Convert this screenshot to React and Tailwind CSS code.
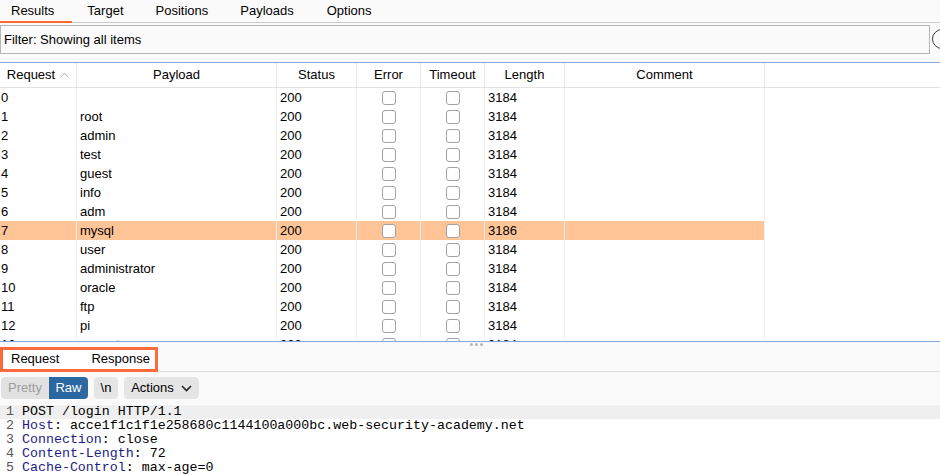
import React from 'react';

const columns = [
  { key: 'request', label: 'Request', width: 'w-[77px]' },
  { key: 'payload', label: 'Payload', width: 'w-[200px]' },
  { key: 'status', label: 'Status', width: 'w-[80px]' },
  { key: 'error', label: 'Error', width: 'w-[64px]' },
  { key: 'timeout', label: 'Timeout', width: 'w-[64px]' },
  { key: 'length', label: 'Length', width: 'w-[80px]' },
  { key: 'comment', label: 'Comment', width: 'w-[200px]' },
];

const payloads = ['', 'root', 'admin', 'test', 'guest', 'info', 'adm', 'mysql', 'user', 'administrator', 'oracle', 'ftp', 'pi', 'puppet', 'ansible'];

const rows = payloads.map((p, i) => ({
  id: i,
  payload: p,
  status: 200,
  length: i === 7 ? 3186 : 3184,
  selected: i === 7,
}));

const requestLines = [
  { name: null, value: 'POST /login HTTP/1.1' },
  { name: 'Host', value: 'acce1f1c1f1e258680c1144100a000bc.web-security-academy.net' },
  { name: 'Connection', value: 'close' },
  { name: 'Content-Length', value: '72' },
  { name: 'Cache-Control', value: 'max-age=0' },
];

const Checkbox = () => (
  <span className="block w-[14px] h-[14px] rounded-[3px] border border-[#a3a3a3] bg-white" />
);

const SortCaret = () => (
  <svg width="9" height="6" viewBox="0 0 9 6" className="ml-[5px]">
    <path d="M0.5 5.5 L4.5 1 L8.5 5.5" fill="none" stroke="#b0b0b0" strokeWidth="1" />
  </svg>
);

const Chevron = () => (
  <svg width="11" height="7" viewBox="0 0 11 7" className="ml-[7px]">
    <path d="M1 1 L5.5 5.5 L10 1" fill="none" stroke="#222" strokeWidth="1.6" />
  </svg>
);

const App = () => {
  return (
    <div className="w-[940px] h-[475px] overflow-hidden bg-white text-[13px] text-black font-['Liberation_Sans',Arial,sans-serif]">
      {/* top tabs */}
      <div className="h-[23px] bg-[#fafafa] border-b border-[#cacaca] flex">
        <div className="relative pl-[11px] pr-[18px] h-full flex items-center">
          Results
          <span className="absolute left-0 right-0 bottom-[-1px] h-[2px] bg-[#ff6a33]" />
        </div>
        <div className="ml-[15px] h-full flex items-center">Target</div>
        <div className="ml-[32px] h-full flex items-center">Positions</div>
        <div className="ml-[32px] h-full flex items-center">Payloads</div>
        <div className="ml-[33px] h-full flex items-center">Options</div>
      </div>

      {/* filter */}
      <div className="h-[40px] bg-[#fafafa] border-b border-[#84a9d9] pt-[2px] flex items-start overflow-hidden">
        <div className="w-[930px] shrink-0 h-[29px] border border-[#b6b6b6] bg-[#fafafa] flex items-center pl-[3px]">
          Filter: Showing all items
        </div>
        <span className="shrink-0 ml-[2px] mt-[4px] w-[20px] h-[20px] rounded-full border border-[#3a3a3a]" />
      </div>

      {/* table header */}
      <div className="h-[25px] flex border-b border-[#e2e2e2] bg-white">
        {columns.map((c) => (
          <div key={c.key} className={`${c.width} shrink-0 h-full border-r border-[#e6e6e6] flex items-center justify-center`}>
            {c.label}
            {c.key === 'request' && <SortCaret />}
          </div>
        ))}
      </div>

      {/* table rows */}
      <div className="h-[253px] overflow-hidden">
        {rows.map((r) => (
          <div key={r.id} className="h-[19px] flex">
            <div className={`flex shrink-0 ${r.selected ? 'bg-[#ffc597]' : ''}`}>
              <div className="w-[77px] h-[19px] pl-[1px] flex items-center border-r border-[#f0f0f0]">{r.id}</div>
              <div className="w-[200px] h-[19px] pl-[3px] flex items-center border-r border-[#f0f0f0]">{r.payload}</div>
              <div className="w-[80px] h-[19px] pl-[3px] flex items-center border-r border-[#f0f0f0]">{r.status}</div>
              <div className="w-[64px] h-[19px] flex items-center justify-center border-r border-[#f0f0f0]"><Checkbox /></div>
              <div className="w-[64px] h-[19px] flex items-center justify-center border-r border-[#f0f0f0]"><Checkbox /></div>
              <div className="w-[80px] h-[19px] pl-[3px] flex items-center border-r border-[#f0f0f0]">{r.length}</div>
              <div className="w-[200px] h-[19px] border-r border-[#f0f0f0]" />
            </div>
          </div>
        ))}
      </div>

      {/* splitter */}
      <div className="h-[6px] border-t border-[#86a8d6] bg-[#fafafa] flex items-start pt-[1px] pl-[470px] gap-[2px]">
        <span className="w-[3px] h-[3px] rounded-full bg-[#b4b4b4]" />
        <span className="w-[3px] h-[3px] rounded-full bg-[#b4b4b4]" />
        <span className="w-[3px] h-[3px] rounded-full bg-[#b4b4b4]" />
      </div>

      {/* request / response tabs */}
      <div className="h-[25px] bg-[#fafafa] border-b border-[#dcdcdc] flex">
        <div className="w-[158px] h-[25px] border-[3px] border-[#ff6a3c] bg-white flex items-center pb-[2px]">
          <span className="ml-[8px]">Request</span>
          <span className="ml-[32px]">Response</span>
        </div>
      </div>

      {/* editor toolbar */}
      <div className="h-[32px] bg-[#fafafa] flex items-start pt-[5px] pl-[1px]">
        <div className="h-[22px] w-[48px] bg-[#e2e2e2] text-[#9d9d9d] rounded-l-[4px] flex items-center justify-center">Pretty</div>
        <div className="h-[22px] w-[39px] bg-[#2b67a0] text-white rounded-r-[4px] flex items-center justify-center">Raw</div>
        <div className="h-[22px] w-[24px] ml-[6px] bg-[#e5e5e5] rounded-[4px] flex items-center justify-center">\n</div>
        <div className="h-[22px] w-[75px] ml-[6px] bg-[#e5e5e5] rounded-[4px] flex items-center justify-center">
          Actions
          <Chevron />
        </div>
      </div>

      {/* editor */}
      <div className="pt-[1px] font-['Liberation_Mono','Courier_New',monospace] text-[13.3px]">
        {requestLines.map((line, i) => (
          <div key={i} className={`h-[14px] flex items-center whitespace-pre ${i === 0 ? 'bg-[#efefef]' : ''}`}>
            <span className="w-[14px] text-right text-[#555]">{i + 1}</span>
            <span className="ml-[8px]">
              {line.name ? (
                <>
                  <span className="text-[#1c1c86]">{line.name}</span>
                  {': '}
                  {line.value}
                </>
              ) : (
                line.value
              )}
            </span>
          </div>
        ))}
      </div>
    </div>
  );
};

export default App;
